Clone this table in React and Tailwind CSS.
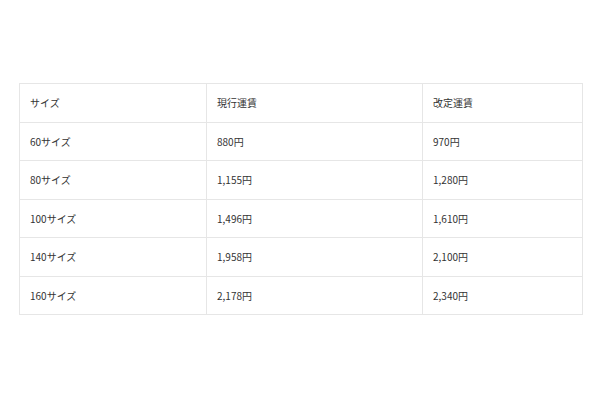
const rows = [
  ['60サイズ', '880円', '970円'],
  ['80サイズ', '1,155円', '1,280円'],
  ['100サイズ', '1,496円', '1,610円'],
  ['140サイズ', '1,958円', '2,100円'],
  ['160サイズ', '2,178円', '2,340円'],
];

export default function App() {
  return (
    <div className="w-[600px] h-[400px] bg-white pt-[83px] pl-[19px] font-['Noto_Sans_CJK_JP',sans-serif] text-[10px] text-[#333]">
      <table className="w-[563px] border-collapse table-fixed">
        <colgroup>
          <col className="w-[187px]" />
          <col className="w-[216px]" />
          <col className="w-[160px]" />
        </colgroup>
        <tbody>
          <tr className="h-[38.5px]">
            <td className="border border-[#e6e6e6] px-[10px]">サイズ</td>
            <td className="border border-[#e6e6e6] px-[10px]">現行運賃</td>
            <td className="border border-[#e6e6e6] px-[10px]">改定運賃</td>
          </tr>
          {rows.map((r) => (
            <tr key={r[0]} className="h-[38.5px]">
              {r.map((c, i) => (
                <td key={i} className="border border-[#e6e6e6] px-[10px]">{c}</td>
              ))}
            </tr>
          ))}
        </tbody>
      </table>
    </div>
  );
}
